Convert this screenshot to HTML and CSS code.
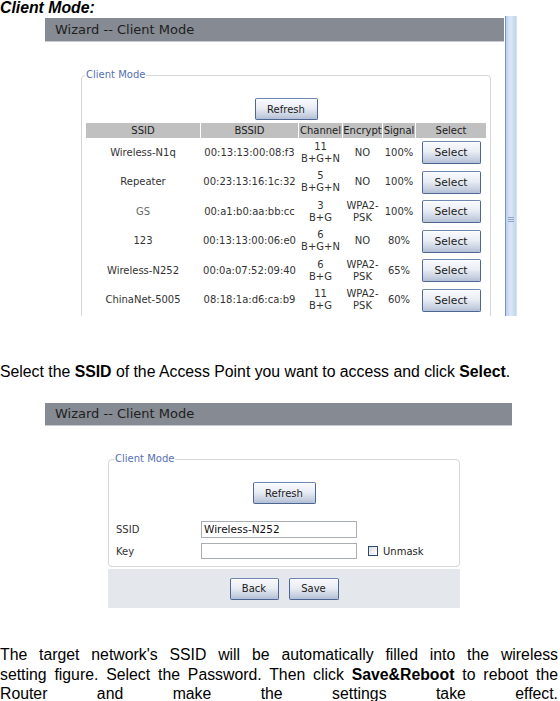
FILE: index.html
```html
<!DOCTYPE html>
<html>
<head>
<meta charset="utf-8">
<link rel="stylesheet" href="styles.css">
</head>
<body>
<p class="heading">Client Mode:</p>

<div class="shot shot1">
  <div class="win">
    <div class="bar">Wizard -- Client Mode</div>
    <fieldset class="box box1">
      <legend>Client Mode</legend>
      <div class="center"><button class="btn btn-refresh">Refresh</button></div>
      <table class="aps">
        <thead>
          <tr>
            <th class="c-ssid">SSID</th>
            <th class="c-bssid">BSSID</th>
            <th class="c-ch">Channel</th>
            <th class="c-enc">Encrypt</th>
            <th class="c-sig">Signal</th>
            <th class="c-sel">Select</th>
          </tr>
        </thead>
        <tbody>
          <tr><td>Wireless-N1q</td><td>00:13:13:00:08:f3</td><td>11<br>B+G+N</td><td>NO</td><td>100%</td><td><button class="btn btn-select">Select</button></td></tr>
          <tr><td>Repeater</td><td>00:23:13:16:1c:32</td><td>5<br>B+G+N</td><td>NO</td><td>100%</td><td><button class="btn btn-select">Select</button></td></tr>
          <tr><td class="dim">GS</td><td>00:a1:b0:aa:bb:cc</td><td>3<br>B+G</td><td>WPA2-<br>PSK</td><td>100%</td><td><button class="btn btn-select">Select</button></td></tr>
          <tr><td>123</td><td>00:13:13:00:06:e0</td><td>6<br>B+G+N</td><td>NO</td><td>80%</td><td><button class="btn btn-select">Select</button></td></tr>
          <tr><td>Wireless-N252</td><td>00:0a:07:52:09:40</td><td>6<br>B+G</td><td>WPA2-<br>PSK</td><td>65%</td><td><button class="btn btn-select">Select</button></td></tr>
          <tr><td>ChinaNet-5005</td><td>08:18:1a:d6:ca:b9</td><td>11<br>B+G</td><td>WPA2-<br>PSK</td><td>60%</td><td><button class="btn btn-select">Select</button></td></tr>
        </tbody>
      </table>
    </fieldset>
  </div>
  <div class="scroll"><span class="grip"></span></div>
</div>

<p class="text t1">Select the <b>SSID</b> of the Access Point you want to access and click <b>Select</b>.</p>

<div class="shot shot2">
  <div class="bar">Wizard -- Client Mode</div>
  <fieldset class="box box2">
    <legend>Client Mode</legend>
    <div class="center"><button class="btn btn-refresh">Refresh</button></div>
    <div class="row row-ssid">
      <span class="lbl">SSID</span>
      <span class="input">Wireless-N252</span>
    </div>
    <div class="row row-key">
      <span class="lbl">Key</span>
      <span class="input input-key"></span>
      <span class="check"></span>
      <span class="unmask">Unmask</span>
    </div>
  </fieldset>
  <div class="actions">
    <button class="btn btn-back">Back</button>
    <button class="btn btn-save">Save</button>
  </div>
</div>

<p class="text t2">The target network's SSID will be automatically filled into the wireless<br>setting figure. Select the Password. Then click <b>Save&amp;Reboot</b> to reboot the<br>Router and make the settings take effect.</p>
</body>
</html>
```

FILE: styles.css
```css
html, body {
  margin: 0;
  padding: 0;
  background: #ffffff;
}
body {
  font-family: "Liberation Sans", Arial, sans-serif;
  color: #000;
  width: 560px;
  overflow: hidden;
}
.heading {
  margin: 0;
  font-size: 15.8px;
  line-height: 15px;
  height: 14px;
  font-weight: bold;
  font-style: italic;
}
.shot {
  margin-left: 45px;
  font-family: "DejaVu Sans", Verdana, sans-serif;
  color: #333;
}
.shot1 {
  margin-top: 2px;
  width: 472px;
  height: 300px;
  display: flex;
  gap: 1px;
  overflow: hidden;
}
.win {
  width: 459px;
  flex: none;
}
.bar {
  background: #858a93;
  color: #1e1e1e;
  font-size: 13px;
  line-height: 23px;
  height: 23px;
  padding-left: 10px;
  border-bottom: 1px solid #c9cbcf;
}
.shot1 .bar {
  margin-top: 2px;
}
.box {
  border: 1px solid #d6d6d6;
  border-radius: 4px;
  margin: 0;
  padding: 0;
  box-sizing: border-box;
}
.box legend {
  font-size: 10px;
  line-height: 12px;
  color: #5670b3;
  padding: 0 1px;
}
.box1 legend {
  margin-left: -1px;
}
.box2 legend {
  margin-left: -2px;
}
.box1 {
  margin-top: 27px;
  margin-left: 36px;
  width: 410px;
  padding: 0 4px 30px;
}
.center {
  display: flex;
  justify-content: center;
}
.btn {
  font-family: "DejaVu Sans", Verdana, sans-serif;
  font-size: 10px;
  color: #1a1a1a;
  background: linear-gradient(#f9fafd, #e9edf4 45%, #c9d2e2 80%, #b3bfd5);
  border: 1px solid #4d6694;
  border-top-color: #6f86ae;
  border-radius: 2px;
  padding: 0;
  box-sizing: border-box;
  box-shadow: inset 0 1px 0 #ffffff;
}
.btn-refresh {
  width: 63px;
  height: 22px;
}
.box1 .btn-refresh {
  margin-top: 17px;
}
.aps {
  margin: 3px -1px 0;
  width: 402px;
  table-layout: fixed;
  border-collapse: separate;
  border-spacing: 1px 0;
  font-size: 10px;
  color: #333;
}
.aps th {
  background: #c0c0c0;
  font-weight: normal;
  color: #222;
  height: 15px;
  line-height: 15px;
  padding: 0;
  white-space: nowrap;
}
.aps td {
  padding: 0;
  height: 29.5px;
  line-height: 12px;
  text-align: center;
  vertical-align: middle;
  white-space: nowrap;
}
.aps .dim {
  color: #6a6a6a;
}
.c-ssid { width: 114px; }
.c-bssid { width: 97px; }
.c-ch { width: 43px; }
.c-enc { width: 39px; }
.c-sig { width: 32px; }
.c-sel { width: 70px; }
.btn-select {
  width: 59px;
  height: 23px;
  font-size: 10.7px;
  display: block;
  margin: 0 auto;
}
.scroll {
  width: 12px;
  height: 300px;
  flex: none;
  box-sizing: border-box;
  border-left: 1px solid #7893bd;
  border-right: 1px solid #d7e3f4;
  background: linear-gradient(to right, #bcd0ee, #dbe7f8 45%, #cfddf2 75%, #c2d4ee);
  display: flex;
  flex-direction: column;
  align-items: center;
}
.grip {
  display: block;
  margin-top: 201px;
  width: 6px;
  height: 5px;
  background: repeating-linear-gradient(#8ea4c6 0 1px, transparent 1px 2px);
}
.text {
  margin: 0;
  font-size: 15.8px;
}
.t1 {
  margin-top: 46px;
  line-height: 20px;
}
.shot2 {
  margin-top: 21px;
  width: 467px;
}
.shot2 .bar {
  height: 22px;
  line-height: 22px;
}
.box2 {
  margin-top: 27px;
  margin-left: 63px;
  width: 352px;
  padding: 0 7px 7px 7px;
}
.box2 .btn-refresh {
  margin-top: 17px;
}
.row {
  display: flex;
  align-items: center;
  font-size: 10px;
  color: #333;
}
.row-ssid {
  margin-top: 17px;
}
.row-key {
  margin-top: 5px;
}
.lbl {
  width: 85px;
  flex: none;
}
.input {
  width: 156px;
  height: 17px;
  box-sizing: border-box;
  border: 1px solid #a9aeb5;
  background: #fff;
  color: #111;
  font-size: 10.5px;
  line-height: 15px;
  padding-left: 2px;
  flex: none;
}
.input-key {
  height: 16px;
}
.check {
  width: 10px;
  height: 10px;
  box-sizing: border-box;
  border: 1px solid #2b4a70;
  background: linear-gradient(135deg, #dcdcdc, #ffffff);
  margin-left: 11px;
  flex: none;
}
.unmask {
  margin-left: 5px;
  color: #222;
}
.actions {
  margin-left: 63px;
  margin-top: 2px;
  width: 352px;
  height: 39px;
  background: #e4e8ec;
  display: flex;
  justify-content: center;
  align-items: center;
  gap: 10px;
}
.btn-back {
  width: 49px;
  height: 22px;
}
.btn-save {
  width: 50px;
  height: 22px;
}
.t2 {
  margin-top: 37px;
  width: 558px;
  line-height: 19.5px;
  text-align: justify;
  text-align-last: justify;
}
```
